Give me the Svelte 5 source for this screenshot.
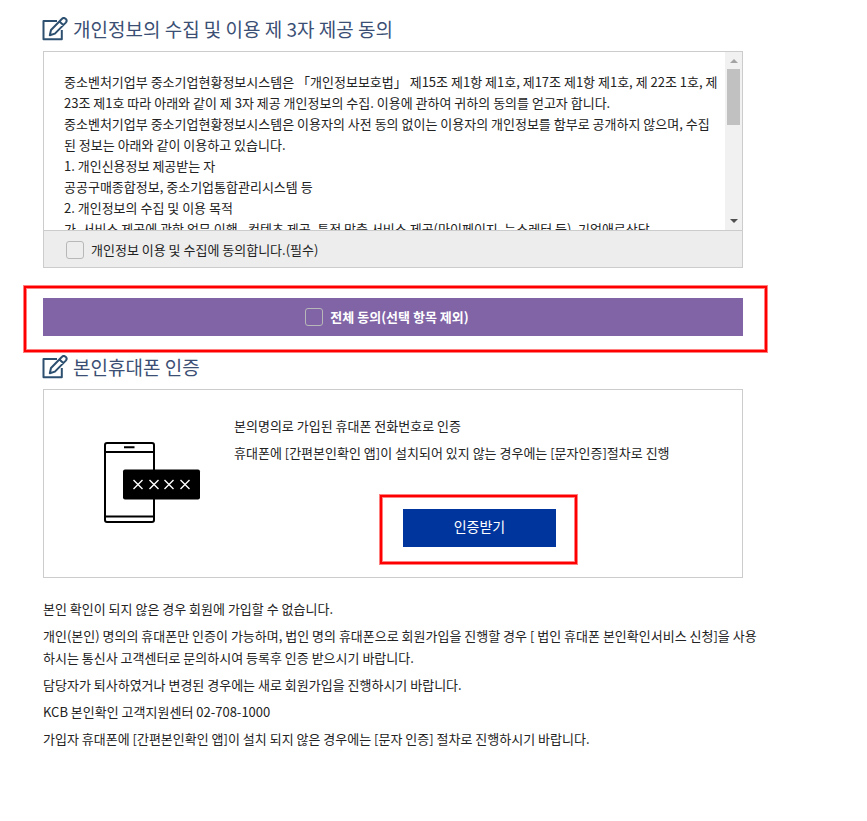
<script>
    let agreePrivacy = false;
    let agreeAll = false;

    const digits = [34, 50, 65, 81];
</script>

{#snippet heading(text)}
    <h2>
        <svg class="edit" viewBox="0 0 27 25" aria-hidden="true">
            <path d="M15 4H1.5v18.3h18.3V13" />
            <path d="M7.8 18.2l1.2-5.2L19.8 2a2.3 2.3 0 0 1 4 3.6L12.9 16.6zM17.4 4.4l4.2 3.8" />
        </svg>
        {text}
    </h2>
{/snippet}

<main>
    {@render heading('개인정보의 수집 및 이용 제 3자 제공 동의')}
    <section class="box">
        <div class="terms">
            <p>
                중소벤처기업부 중소기업현황정보시스템은 「개인정보보호법」 제15조 제1항 제1호, 제17조 제1항 제1호, 제 22조 1호, 제<br />
                23조 제1호 따라 아래와 같이 제 3자 제공 개인정보의 수집. 이용에 관하여 귀하의 동의를 얻고자 합니다.<br />
                중소벤처기업부 중소기업현황정보시스템은 이용자의 사전 동의 없이는 이용자의 개인정보를 함부로 공개하지 않으며, 수집<br />
                된 정보는 아래와 같이 이용하고 있습니다.<br />
                1. 개인신용정보 제공받는 자<br />
                공공구매종합정보, 중소기업통합관리시스템 등<br />
                2. 개인정보의 수집 및 이용 목적<br />
                가. 서비스 제공에 관한 업무 이행 - 컨텐츠 제공, 특정 맞춤 서비스 제공(마이페이지, 뉴스레터 등), 기업애로상담
            </p>
            <div class="scrollbar" aria-hidden="true">
                <span class="arrow up"></span>
                <span class="thumb"></span>
                <span class="arrow down"></span>
            </div>
        </div>
        <label class="agree">
            <input type="checkbox" bind:checked={agreePrivacy} />
            개인정보 이용 및 수집에 동의합니다.(필수)
        </label>
    </section>

    <div class="all mark">
        <label>
            <input type="checkbox" bind:checked={agreeAll} />
            전체 동의(선택 항목 제외)
        </label>
    </div>

    {@render heading('본인휴대폰 인증')}
    <section class="box phone">
        <svg class="device" viewBox="0 0 97 81" aria-hidden="true">
            <rect x="1" y="1" width="49" height="79" rx="2" />
            <path d="M1 10h49M1 74.5h49M20 5.3h10.5" />
            <rect class="code" x="19" y="27.5" width="77" height="30" rx="2" />
            {#each digits as x}
                <path class="cross" d="M{x - 4.5} 38l9 9m0-9l-9 9" />
            {/each}
        </svg>
        <div class="guide">
            <p>본의명의로 가입된 휴대폰 전화번호로 인증</p>
            <p>휴대폰에 [간편본인확인 앱]이 설치되어 있지 않는 경우에는 [문자인증]절차로 진행</p>
            <div class="verify mark">
                <button type="button">인증받기</button>
            </div>
        </div>
    </section>

    <ul>
        <li>본인 확인이 되지 않은 경우 회원에 가입할 수 없습니다.</li>
        <li>
            개인(본인) 명의의 휴대폰만 인증이 가능하며, 법인 명의 휴대폰으로 회원가입을 진행할 경우 [ 법인 휴대폰 본인확인서비스 신청]을 사용<br />
            하시는 통신사 고객센터로 문의하시여 등록후 인증 받으시기 바랍니다.
        </li>
        <li>담당자가 퇴사하였거나 변경된 경우에는 새로 회원가입을 진행하시기 바랍니다.</li>
        <li>KCB 본인확인 고객지원센터 02-708-1000</li>
        <li>가입자 휴대폰에 [간편본인확인 앱]이 설치 되지 않은 경우에는 [문자 인증] 절차로 진행하시기 바랍니다.</li>
    </ul>
</main>

<style>
    :global(body) {
        margin: 0;
        background: #fff;
    }

    main {
        max-width: 700px;
        padding: 14px 43px 40px;
        color: #222;
        font: 13px/21px "Noto Sans CJK KR", "Noto Sans", sans-serif;
    }

    h2 {
        display: flex;
        align-items: center;
        gap: 4px;
        margin: 0 0 7px -1px;
        color: #3b4f74;
        font-size: 19px;
        font-weight: 400;
        line-height: 30px;
    }

    p {
        margin: 0;
    }

    .edit {
        width: 27px;
        height: 25px;
        fill: none;
        stroke: #2d5070;
        stroke-width: 2;
        stroke-linejoin: round;
    }

    .box {
        border: 1px solid #ccc;
    }

    .terms {
        display: flex;
        height: 178px;
        overflow: hidden;
    }

    .terms p {
        flex: 1;
        min-width: 0;
        padding: 19px 0 0 20px;
    }

    .scrollbar {
        display: flex;
        flex-direction: column;
        align-items: center;
        width: 17px;
        background: #f1f1f1;
    }

    .thumb {
        width: 13px;
        height: 56px;
        margin: 6px 0 auto;
        background: #c1c1c1;
    }

    .arrow {
        border: 4px solid transparent;
    }

    .up {
        margin-top: 7px;
        border-top-width: 0;
        border-bottom-color: #a3a3a3;
    }

    .down {
        margin-bottom: 7px;
        border-top-color: #505050;
        border-bottom-width: 0;
    }

    label {
        display: flex;
        align-items: center;
        gap: 7px;
    }

    .agree {
        padding: 8px 22px 7px;
        border-top: 1px solid #ccc;
        background: #ededed;
    }

    input {
        appearance: none;
        box-sizing: border-box;
        width: 18px;
        height: 18px;
        margin: 0;
        border: 1px solid #b8b8b8;
        border-radius: 3px;
    }

    input:checked {
        background: #00359d;
    }

    /* red frame round the parts the user has to click */
    .mark {
        position: relative;
    }

    .mark::after {
        content: "";
        position: absolute;
        border: 2px solid #f00;
        box-shadow: 0 0 0 1px #ff8080, inset 0 0 0 1px #ff8080;
        pointer-events: none;
    }

    .all {
        margin: 30px 0 16px;
        background: #8164a6;
    }

    .all::after {
        inset: -12px -24px -16px -19px;
    }

    .all label {
        justify-content: center;
        padding: 8px 12px 9px 0;
        color: #fff;
        font-weight: 700;
    }

    .phone {
        display: flex;
        align-items: flex-start;
        gap: 33px;
        padding: 22px 17px 30px 60px;
    }

    .device {
        flex: none;
        width: 97px;
        height: 81px;
        margin-top: 30px;
        fill: none;
        stroke: #000;
        stroke-width: 2;
    }

    .code {
        fill: #000;
        stroke: none;
    }

    .cross {
        stroke: #fff;
        stroke-width: 1.4;
    }

    .guide {
        flex: 1;
        line-height: 27px;
    }

    .verify {
        width: fit-content;
        margin: 43px auto 0;
    }

    .verify::after {
        inset: -14px -21px -17px -23px;
    }

    button {
        display: block;
        padding: 7px 51px 10px;
        border: 0;
        background: #00359d;
        color: #fff;
        font: 14px/21px "Noto Sans CJK KR", "Noto Sans", sans-serif;
    }

    ul {
        display: grid;
        gap: 5px;
        margin: 20px -24px 0 0;
        padding: 0;
        list-style: none;
        line-height: 22px;
    }
</style>
